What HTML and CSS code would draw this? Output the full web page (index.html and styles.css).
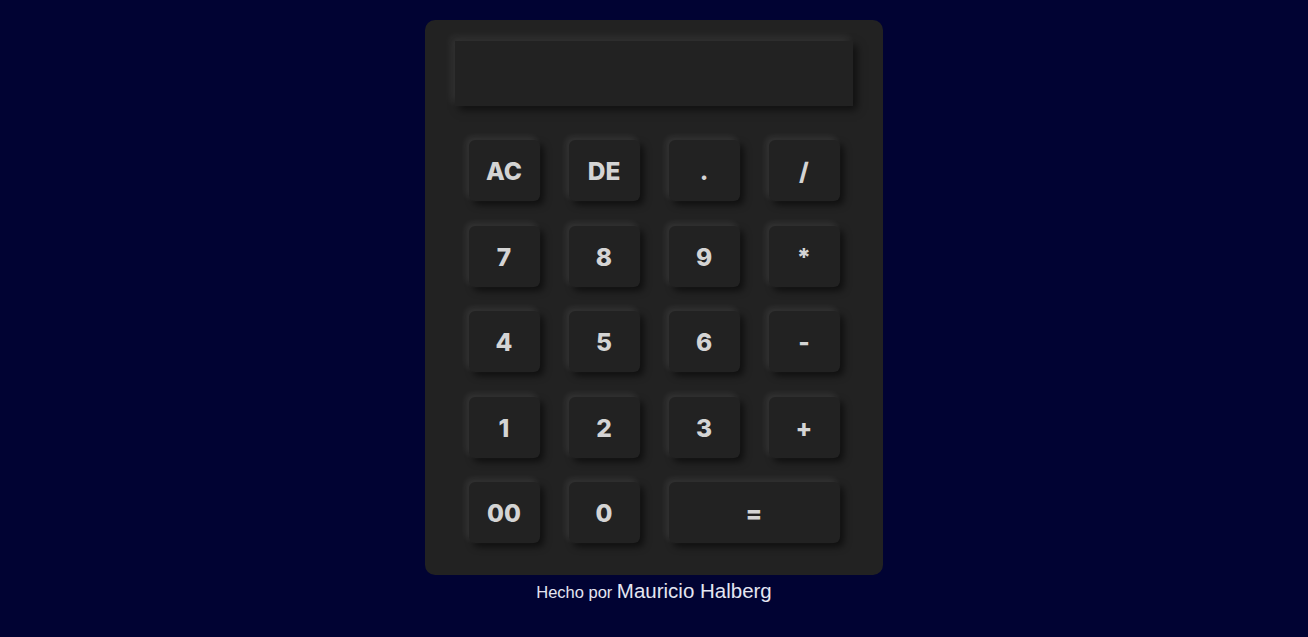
FILE: index.html
```html
<!DOCTYPE html>
<html lang="es">
<head>
<meta charset="utf-8">
<title>Calculadora</title>
<link rel="stylesheet" href="styles.css">
</head>
<body>
<main class="page">
  <div class="calculator">
    <div class="display"></div>
    <div class="keys">
      <button class="key">AC</button>
      <button class="key">DE</button>
      <button class="key">.</button>
      <button class="key">/</button>
      <button class="key">7</button>
      <button class="key">8</button>
      <button class="key">9</button>
      <button class="key">*</button>
      <button class="key">4</button>
      <button class="key">5</button>
      <button class="key">6</button>
      <button class="key">-</button>
      <button class="key">1</button>
      <button class="key">2</button>
      <button class="key">3</button>
      <button class="key">+</button>
      <button class="key">00</button>
      <button class="key">0</button>
      <button class="key key-wide">=</button>
    </div>
  </div>
  <p class="credit"><span class="credit-small">Hecho por</span> <span class="credit-name">Mauricio Halberg</span></p>
</main>
</body>
</html>
```

FILE: styles.css
```css
html, body {
  margin: 0;
  padding: 0;
  height: 100%;
}

body {
  background: #010333;
  font-family: "Liberation Sans", Arial, sans-serif;
}

.page {
  display: flex;
  flex-direction: column;
  align-items: center;
  padding-top: 20px;
}

.calculator {
  width: 398px;
  padding: 21px 30px 32px;
  background: #222222;
  border-radius: 10px;
}

.display {
  height: 65px;
  background: #222222;
  box-shadow: -4px -4px 8px rgba(255, 255, 255, 0.08),
              4px 4px 8px rgba(0, 0, 0, 0.55);
  margin-bottom: 34px;
}

.keys {
  display: grid;
  grid-template-columns: repeat(4, 71px);
  grid-auto-rows: 61px;
  column-gap: 29px;
  row-gap: 24.5px;
  justify-content: center;
}

.key {
  border: none;
  background: #222222;
  color: #d4d4d4;
  font-family: Inter, "Liberation Sans", Arial, sans-serif;
  font-weight: 800;
  font-size: 24.5px;
  border-radius: 6px;
  padding: 1px 0 0;
  box-shadow: -3px -3px 6px rgba(255, 255, 255, 0.09),
              4px 4px 7px rgba(0, 0, 0, 0.55);
}

.key-wide {
  grid-column: span 2;
}

.credit {
  margin: 4px 0 0;
  color: #e4e6f2;
  line-height: 24px;
}

.credit-small {
  font-size: 16.5px;
}

.credit-name {
  font-size: 20.5px;
}
```
